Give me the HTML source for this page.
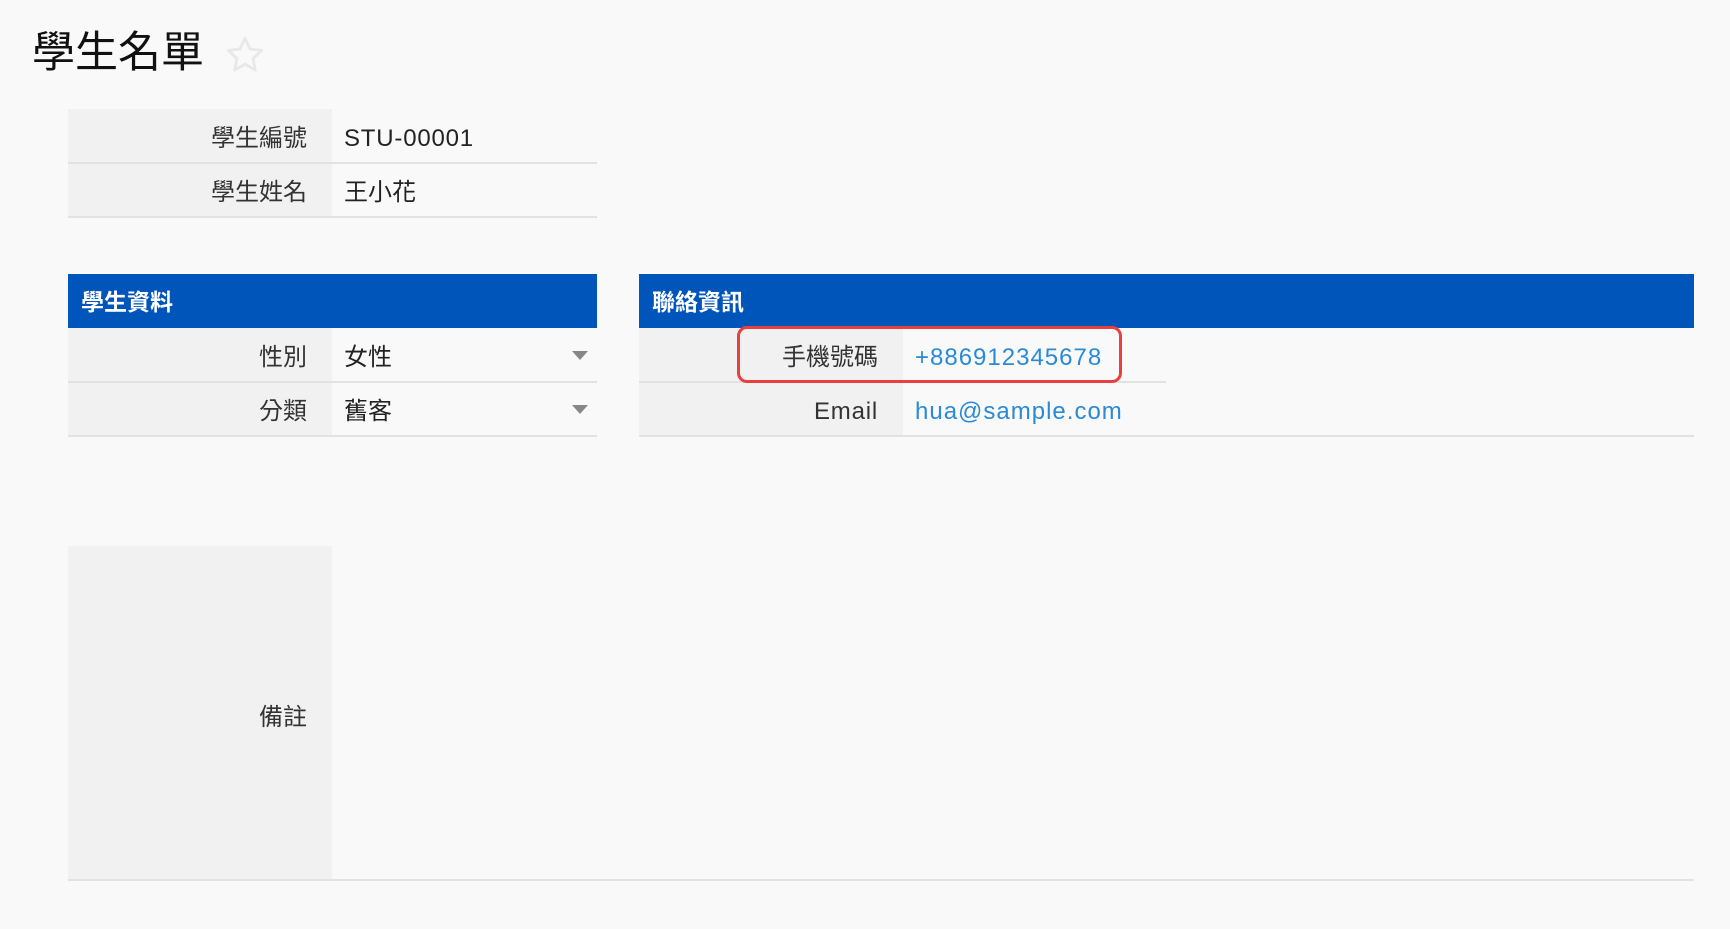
<!DOCTYPE html>
<html><head><meta charset="utf-8"><style>
*{margin:0;padding:0;box-sizing:border-box}
body{width:1730px;height:929px;background:#f9f9f9;font-family:"Liberation Sans","Noto Sans CJK TC",sans-serif;position:relative;overflow:hidden;color:#222}
.a{position:absolute}
.lab{background:#f1f1f1}
.line{background:#e2e2e2;height:2px}
.t{position:absolute;font-size:24px;line-height:54px;white-space:nowrap;margin-top:3px}
.l{text-align:right;color:#333}
.hd{background:#0055bb;color:#fff;font-weight:bold;font-size:23px;line-height:56px;padding-left:13px}
.lk{color:#2a8ad6;letter-spacing:1px}
.ls{letter-spacing:0.8px}
.tri{position:absolute;width:0;height:0;border-left:8px solid transparent;border-right:8px solid transparent;border-top:9px solid #888}
</style></head><body>
<div class="a" style="left:32px;top:25px;font-size:43px;line-height:56px;color:#111">學生名單</div>
<svg class="a" style="left:224px;top:34px" width="42" height="42" viewBox="0 0 24 24"><path d="M12 2.5l2.9 6.1 6.6.8-4.9 4.6 1.3 6.6L12 17.3l-5.9 3.3 1.3-6.6-4.9-4.6 6.6-.8z" fill="none" stroke="#e8e8e8" stroke-width="1.6" stroke-linejoin="round"/></svg>

<div class="a lab" style="left:68px;top:109px;width:264px;height:108px"></div>
<div class="a line" style="left:68px;top:162px;width:529px"></div>
<div class="a line" style="left:68px;top:216px;width:529px"></div>
<div class="t l" style="left:68px;top:109px;width:239px">學生編號</div>
<div class="t ls" style="left:344px;top:109px">STU-00001</div>
<div class="t l" style="left:68px;top:163px;width:239px">學生姓名</div>
<div class="t" style="left:344px;top:163px">王小花</div>

<div class="a hd" style="left:68px;top:274px;width:529px;height:54px">學生資料</div>
<div class="a lab" style="left:68px;top:328px;width:264px;height:108px"></div>
<div class="a line" style="left:68px;top:381px;width:529px"></div>
<div class="a line" style="left:68px;top:435px;width:529px"></div>
<div class="t l" style="left:68px;top:328px;width:239px">性別</div>
<div class="t" style="left:344px;top:328px">女性</div>
<div class="tri" style="left:572px;top:351px"></div>
<div class="t l" style="left:68px;top:382px;width:239px">分類</div>
<div class="t" style="left:344px;top:382px">舊客</div>
<div class="tri" style="left:572px;top:405px"></div>

<div class="a hd" style="left:639px;top:274px;width:1055px;height:54px">聯絡資訊</div>
<div class="a lab" style="left:639px;top:328px;width:264px;height:108px"></div>
<div class="a line" style="left:639px;top:381px;width:527px"></div>
<div class="a line" style="left:639px;top:435px;width:1055px"></div>
<div class="t l" style="left:639px;top:328px;width:239px">手機號碼</div>
<div class="t lk" style="left:915px;top:328px">+886912345678</div>
<div class="t l ls" style="left:639px;top:382px;width:239px">Email</div>
<div class="t lk" style="left:915px;top:382px">hua@sample.com</div>
<div class="a" style="left:737px;top:326px;width:385px;height:57px;border:3.5px solid #e8403f;border-radius:10px"></div>

<div class="a lab" style="left:68px;top:546px;width:264px;height:334px"></div>
<div class="a line" style="left:68px;top:879px;width:1626px"></div>
<div class="t l" style="left:68px;top:688px;width:239px">備註</div>
</body></html>
